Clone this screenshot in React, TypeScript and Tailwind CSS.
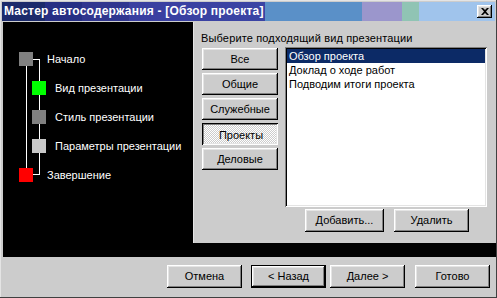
import React from "react";

const btn =
  "flex items-center justify-center bg-[#cccccc] text-black shadow-[inset_-1px_-1px_#000,inset_1px_1px_#fff,inset_-2px_-2px_#808080,inset_2px_2px_#e4e4e4]";

function Step({ color, label, indent }: { color: string; label: string; indent: boolean }) {
  return (
    <div className={`flex items-center h-[14px] ${indent ? "pl-[29px]" : "pl-[16px]"}`}>
      <div className={`w-[14px] h-[14px] ${color}`} />
      <span className={`${indent ? "ml-[9px]" : "ml-[14px]"} text-white leading-[14px] whitespace-nowrap`}>{label}</span>
    </div>
  );
}

export default function App() {
  const cats = ["Все", "Общие", "Служебные", "Проекты", "Деловые"];
  const items = ["Обзор проекта", "Доклад о ходе работ", "Подводим итоги проекта"];
  return (
    <div
      className="w-[497px] h-[298px] bg-[#cccccc] flex flex-col text-[11px] shadow-[inset_-1px_-1px_#404040,inset_1px_1px_#e4e4e4] overflow-hidden"
      style={{ fontFamily: '"Liberation Sans", Arial, sans-serif' }}
    >
      {/* title bar */}
      <div className="mx-[2px] mt-[2px] h-[19px] flex items-center pl-[2px] pr-[3px] bg-[linear-gradient(90deg,#1c2b6b_0px,#1c2b6b_43px,#262f84_43px,#262f84_80px,#30368f_80px,#30368f_127px,#3a3fa0_127px,#3a44a4_263px,#5a90c8_263px,#5a90c8_360px,#9b96cc_360px,#9b96cc_400px,#90c4b4_400px,#90c4b4_417px,#a0c4ec_417px,#a0c4ec_100%)]">
        <span className="text-white font-bold text-[12px] tracking-[0.2px] leading-[19px] flex-1 whitespace-nowrap">
          Мастер автосодержания - [Обзор проекта]
        </span>
        <div className={`${btn} w-[15px] h-[13px]`}>
          <svg width="8" height="7" viewBox="0 0 8 7">
            <path d="M0 0h2l2 2 2-2h2L5 3.5 8 7H6L4 5 2 7H0l3-3.5z" fill="#000" />
          </svg>
        </div>
      </div>

      {/* black area */}
      <div className="ml-[3px] mr-[1px] mt-[1px] h-[235px] bg-black flex">
        {/* left steps panel */}
        <div className="relative w-[190px] h-full">
          <div className="absolute left-[23px] top-[44px] w-px h-[102px] bg-white" />
          <div className="absolute left-[36px] top-[37px] w-px h-[116px] bg-white" />
          <div className="absolute left-[30px] top-[37px] w-[7px] h-px bg-white" />
          <div className="absolute left-[30px] top-[152px] w-[7px] h-px bg-white" />
          <div className="relative flex flex-col gap-[15px] pt-[30px]">
            <Step color="bg-[#808080]" label="Начало" indent={false} />
            <Step color="bg-[#00ff00]" label="Вид презентации" indent />
            <Step color="bg-[#808080]" label="Стиль презентации" indent />
            <Step color="bg-[#c8c8c8]" label="Параметры презентации" indent />
            <Step color="bg-[#ff0000]" label="Завершение" indent={false} />
          </div>
        </div>

        {/* right grey panel */}
        <div className="flex-1 flex flex-col">
          <div className="h-[221px] bg-[#cccccc] flex flex-col pl-[8px] shadow-[inset_1px_0_#e4e4e4]">
            <div className="mt-[9px] h-[14px] leading-[14px] text-black whitespace-nowrap tracking-[0.15px]">
              Выберите подходящий вид презентации
            </div>
            <div className="flex mt-[2px]">
              <div className="flex flex-col gap-[3px] ml-[1px] mt-[1px] w-[76px]">
                {cats.map((c) =>
                  c === "Проекты" ? (
                    <div
                      key={c}
                      className="h-[22px] flex items-center justify-center text-black bg-[conic-gradient(#ffffff_25%,#cccccc_0_50%,#ffffff_0_75%,#cccccc_0)] bg-[length:2px_2px] shadow-[inset_1px_1px_#000,inset_-1px_-1px_#fff,inset_2px_2px_#808080,inset_-2px_-2px_#e4e4e4]"
                    >
                      <span className="translate-x-px translate-y-px">{c}</span>
                    </div>
                  ) : (
                    <div key={c} className={`${btn} h-[22px]`}>
                      {c}
                    </div>
                  )
                )}
              </div>
              <div className="ml-[7px] w-[202px] h-[160px] bg-white p-[2px] shadow-[inset_1px_1px_#808080,inset_-1px_-1px_#fff,inset_2px_2px_#000,inset_-2px_-2px_#e4e4e4]">
                {items.map((it, i) => (
                  <div
                    key={it}
                    className={`h-[14px] leading-[14px] px-[2px] whitespace-nowrap ${
                      i === 0 ? "bg-[#0c2a66] text-white" : "text-black"
                    }`}
                  >
                    {it}
                  </div>
                ))}
              </div>
            </div>
            <div className="flex ml-[104px] mt-[2px] gap-[10px]">
              <div className={`${btn} w-[79px] h-[23px]`}>Добавить...</div>
              <div className={`${btn} w-[75px] h-[23px]`}>Удалить</div>
            </div>
          </div>
        </div>
      </div>

      {/* bottom buttons */}
      <div className="flex mt-[8px] ml-[167px]">
        <div className={`${btn} w-[75px] h-[23px]`}>Отмена</div>
        <div className="ml-[9px] w-[75px] h-[23px] border border-black">
          <div className={`${btn} w-full h-full`}>&lt; Назад</div>
        </div>
        <div className={`${btn} ml-[4px] w-[75px] h-[23px]`}>Далее &gt;</div>
        <div className={`${btn} ml-[10px] w-[75px] h-[23px]`}>Готово</div>
      </div>
    </div>
  );
}
